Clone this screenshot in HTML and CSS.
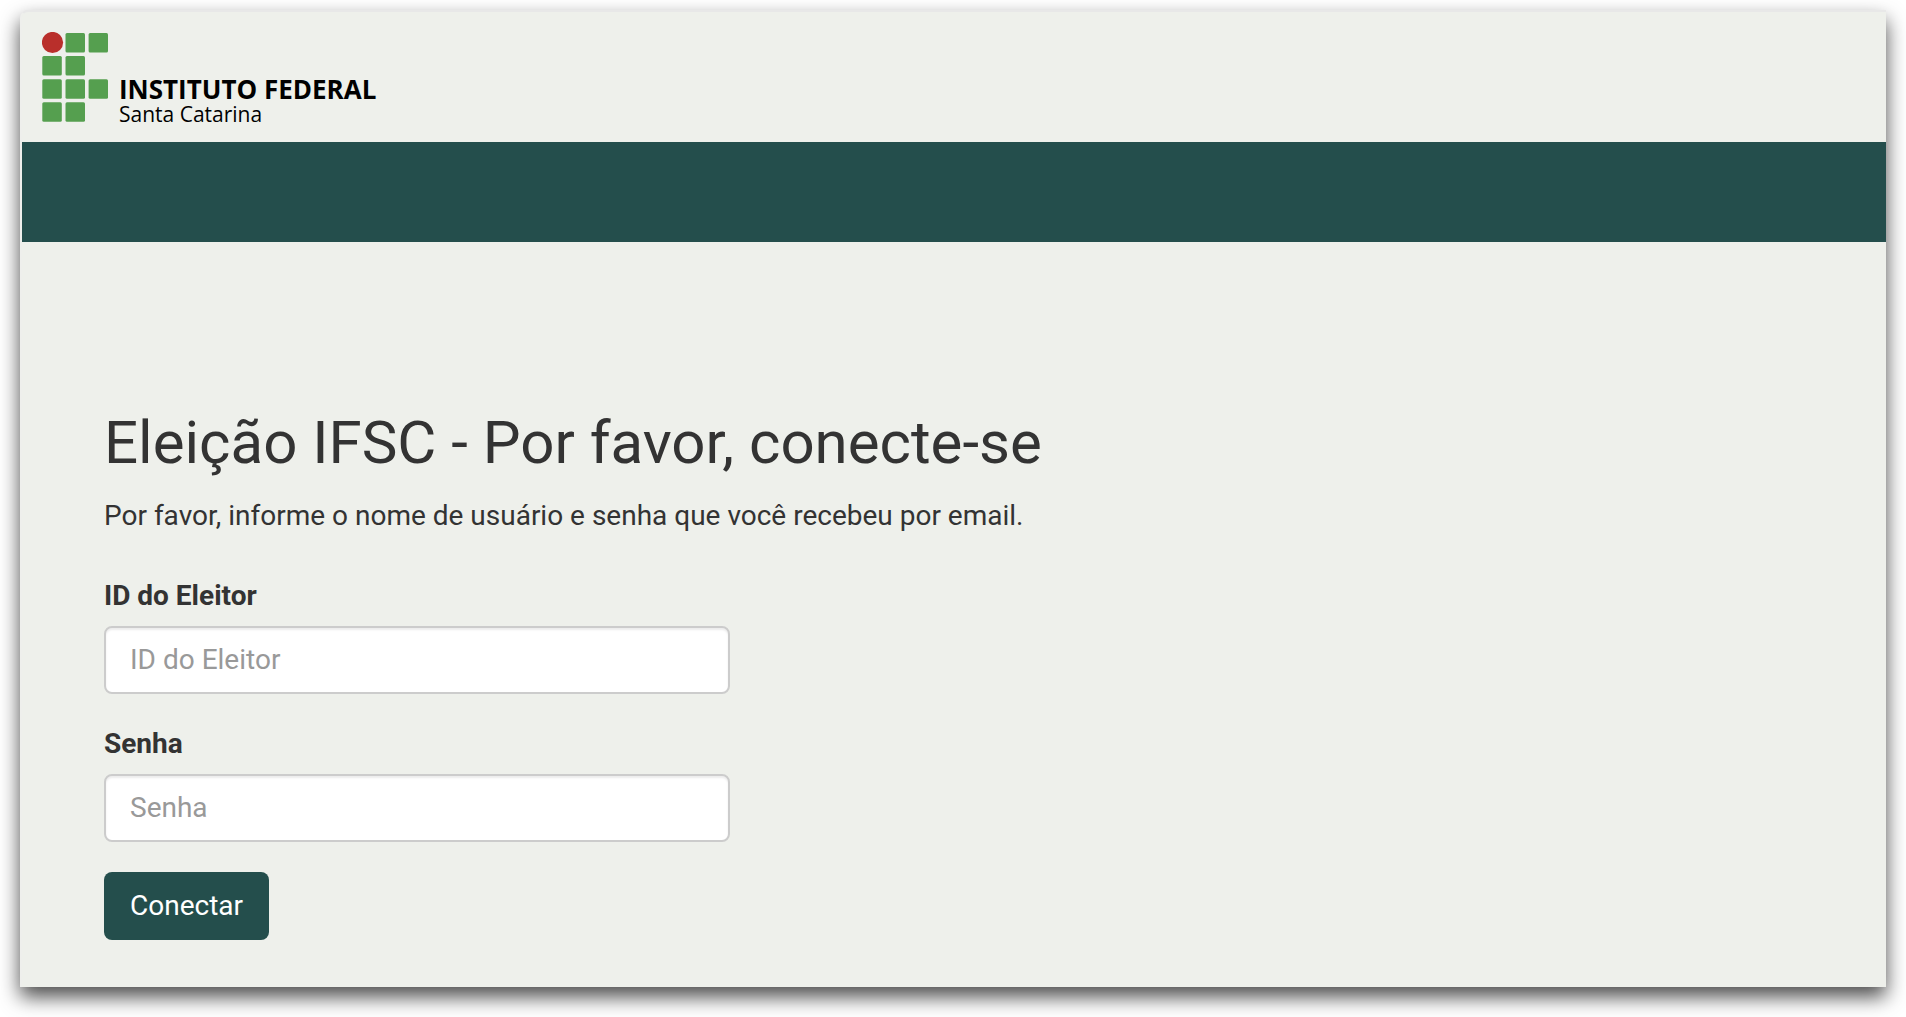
FILE: index.html
```html
<!DOCTYPE html>
<html lang="pt-BR">
<head>
  <meta charset="utf-8">
  <meta name="viewport" content="width=device-width, initial-scale=1">
  <title>Eleição IFSC</title>
  <link rel="stylesheet" href="styles.css">
</head>
<body>
  <div class="window">
    <header class="brand">
      <svg class="brand-mark" width="66" height="90" viewBox="0 0 66 90" aria-hidden="true">
        <circle cx="10.5" cy="10.5" r="10.6" fill="#b92f2b"/>
        <g fill="#559f4f">
          <rect x="23.5" y="1" width="19.5" height="19.5" rx="1.5"/>
          <rect x="46.6" y="1" width="19.4" height="19.5" rx="1.5"/>
          <rect x="0.3" y="24" width="19.5" height="19.5" rx="1.5"/>
          <rect x="23.5" y="24" width="19.5" height="19.5" rx="1.5"/>
          <rect x="0.3" y="47.2" width="19.5" height="19.5" rx="1.5"/>
          <rect x="23.5" y="47.2" width="19.5" height="19.5" rx="1.5"/>
          <rect x="46.6" y="47.2" width="19.4" height="19.5" rx="1.5"/>
          <rect x="0.3" y="70.2" width="19.5" height="19.5" rx="1.5"/>
          <rect x="23.5" y="70.2" width="19.5" height="19.5" rx="1.5"/>
        </g>
      </svg>
      <div class="brand-text">
        <span class="brand-name">INSTITUTO FEDERAL</span>
        <span class="brand-campus">Santa Catarina</span>
      </div>
    </header>
    <div class="banner"></div>
    <main class="content">
      <h1 class="title">Eleição IFSC - Por favor, conecte-se</h1>
      <p class="lead">Por favor, informe o nome de usuário e senha que você recebeu por email.</p>
      <form class="login">
        <div class="field">
          <label class="label" for="voter">ID do Eleitor</label>
          <input class="input" id="voter" type="text" placeholder="ID do Eleitor">
        </div>
        <div class="field">
          <label class="label" for="password">Senha</label>
          <input class="input" id="password" type="password" placeholder="Senha">
        </div>
        <button class="submit" type="submit">Conectar</button>
      </form>
    </main>
  </div>
</body>
</html>
```
FILE: styles.css
```css
* {
  box-sizing: border-box;
}

body {
  display: flex;
  min-height: 100vh;
  margin: 0;
  padding: 10px 20px 30px;
  background: #fff;
  color: #333;
  font-family: Roboto, sans-serif;
  font-size: 28px;
  line-height: 40px;
}

.window {
  flex: 1;
  min-width: 0;
  border-top: 2px solid #e8e8e8;
  border-left: 2px solid #eeefec;
  border-top-left-radius: 8px;
  background: #eef0eb;
  box-shadow: 0 10px 20px rgba(0, 0, 0, 0.7);
}

.brand {
  display: flex;
  align-items: flex-end;
  gap: 11px;
  padding: 20px;
}

.brand-mark {
  flex: none;
}

.brand-text {
  display: flex;
  flex-direction: column;
  color: #000;
  font-family: "Open Sans", sans-serif;
}

.brand-name {
  font-size: 26px;
  font-weight: 700;
  line-height: 34px;
}

.brand-campus {
  font-size: 21px;
  line-height: 16px;
}

.banner {
  height: 100px;
  background: #244e4c;
}

.content {
  padding: 168px 82px 47px;
}

.title {
  margin: 0 0 20px;
  font-size: 60px;
  font-weight: 400;
  line-height: 66px;
}

.lead {
  margin: 0 0 40px;
}

.login {
  display: flex;
  flex-direction: column;
  align-items: flex-start;
  gap: 30px;
  max-width: 626px;
}

.field {
  display: flex;
  flex-direction: column;
  gap: 10px;
  width: 100%;
}

.label {
  font-weight: 700;
}

.input {
  width: 100%;
  height: 68px;
  padding: 10px 24px 12px;
  border: 2px solid #ccc;
  border-radius: 8px;
  background: #fff;
  box-shadow: inset 0 2px 2px rgba(0, 0, 0, 0.075);
  color: #555;
  font: inherit;
}

.input::placeholder {
  color: #999;
  opacity: 1;
}

.submit {
  height: 68px;
  padding: 12px 26px;
  border: 0;
  border-radius: 8px;
  background: #244e4c;
  color: #fff;
  font: inherit;
}
```
